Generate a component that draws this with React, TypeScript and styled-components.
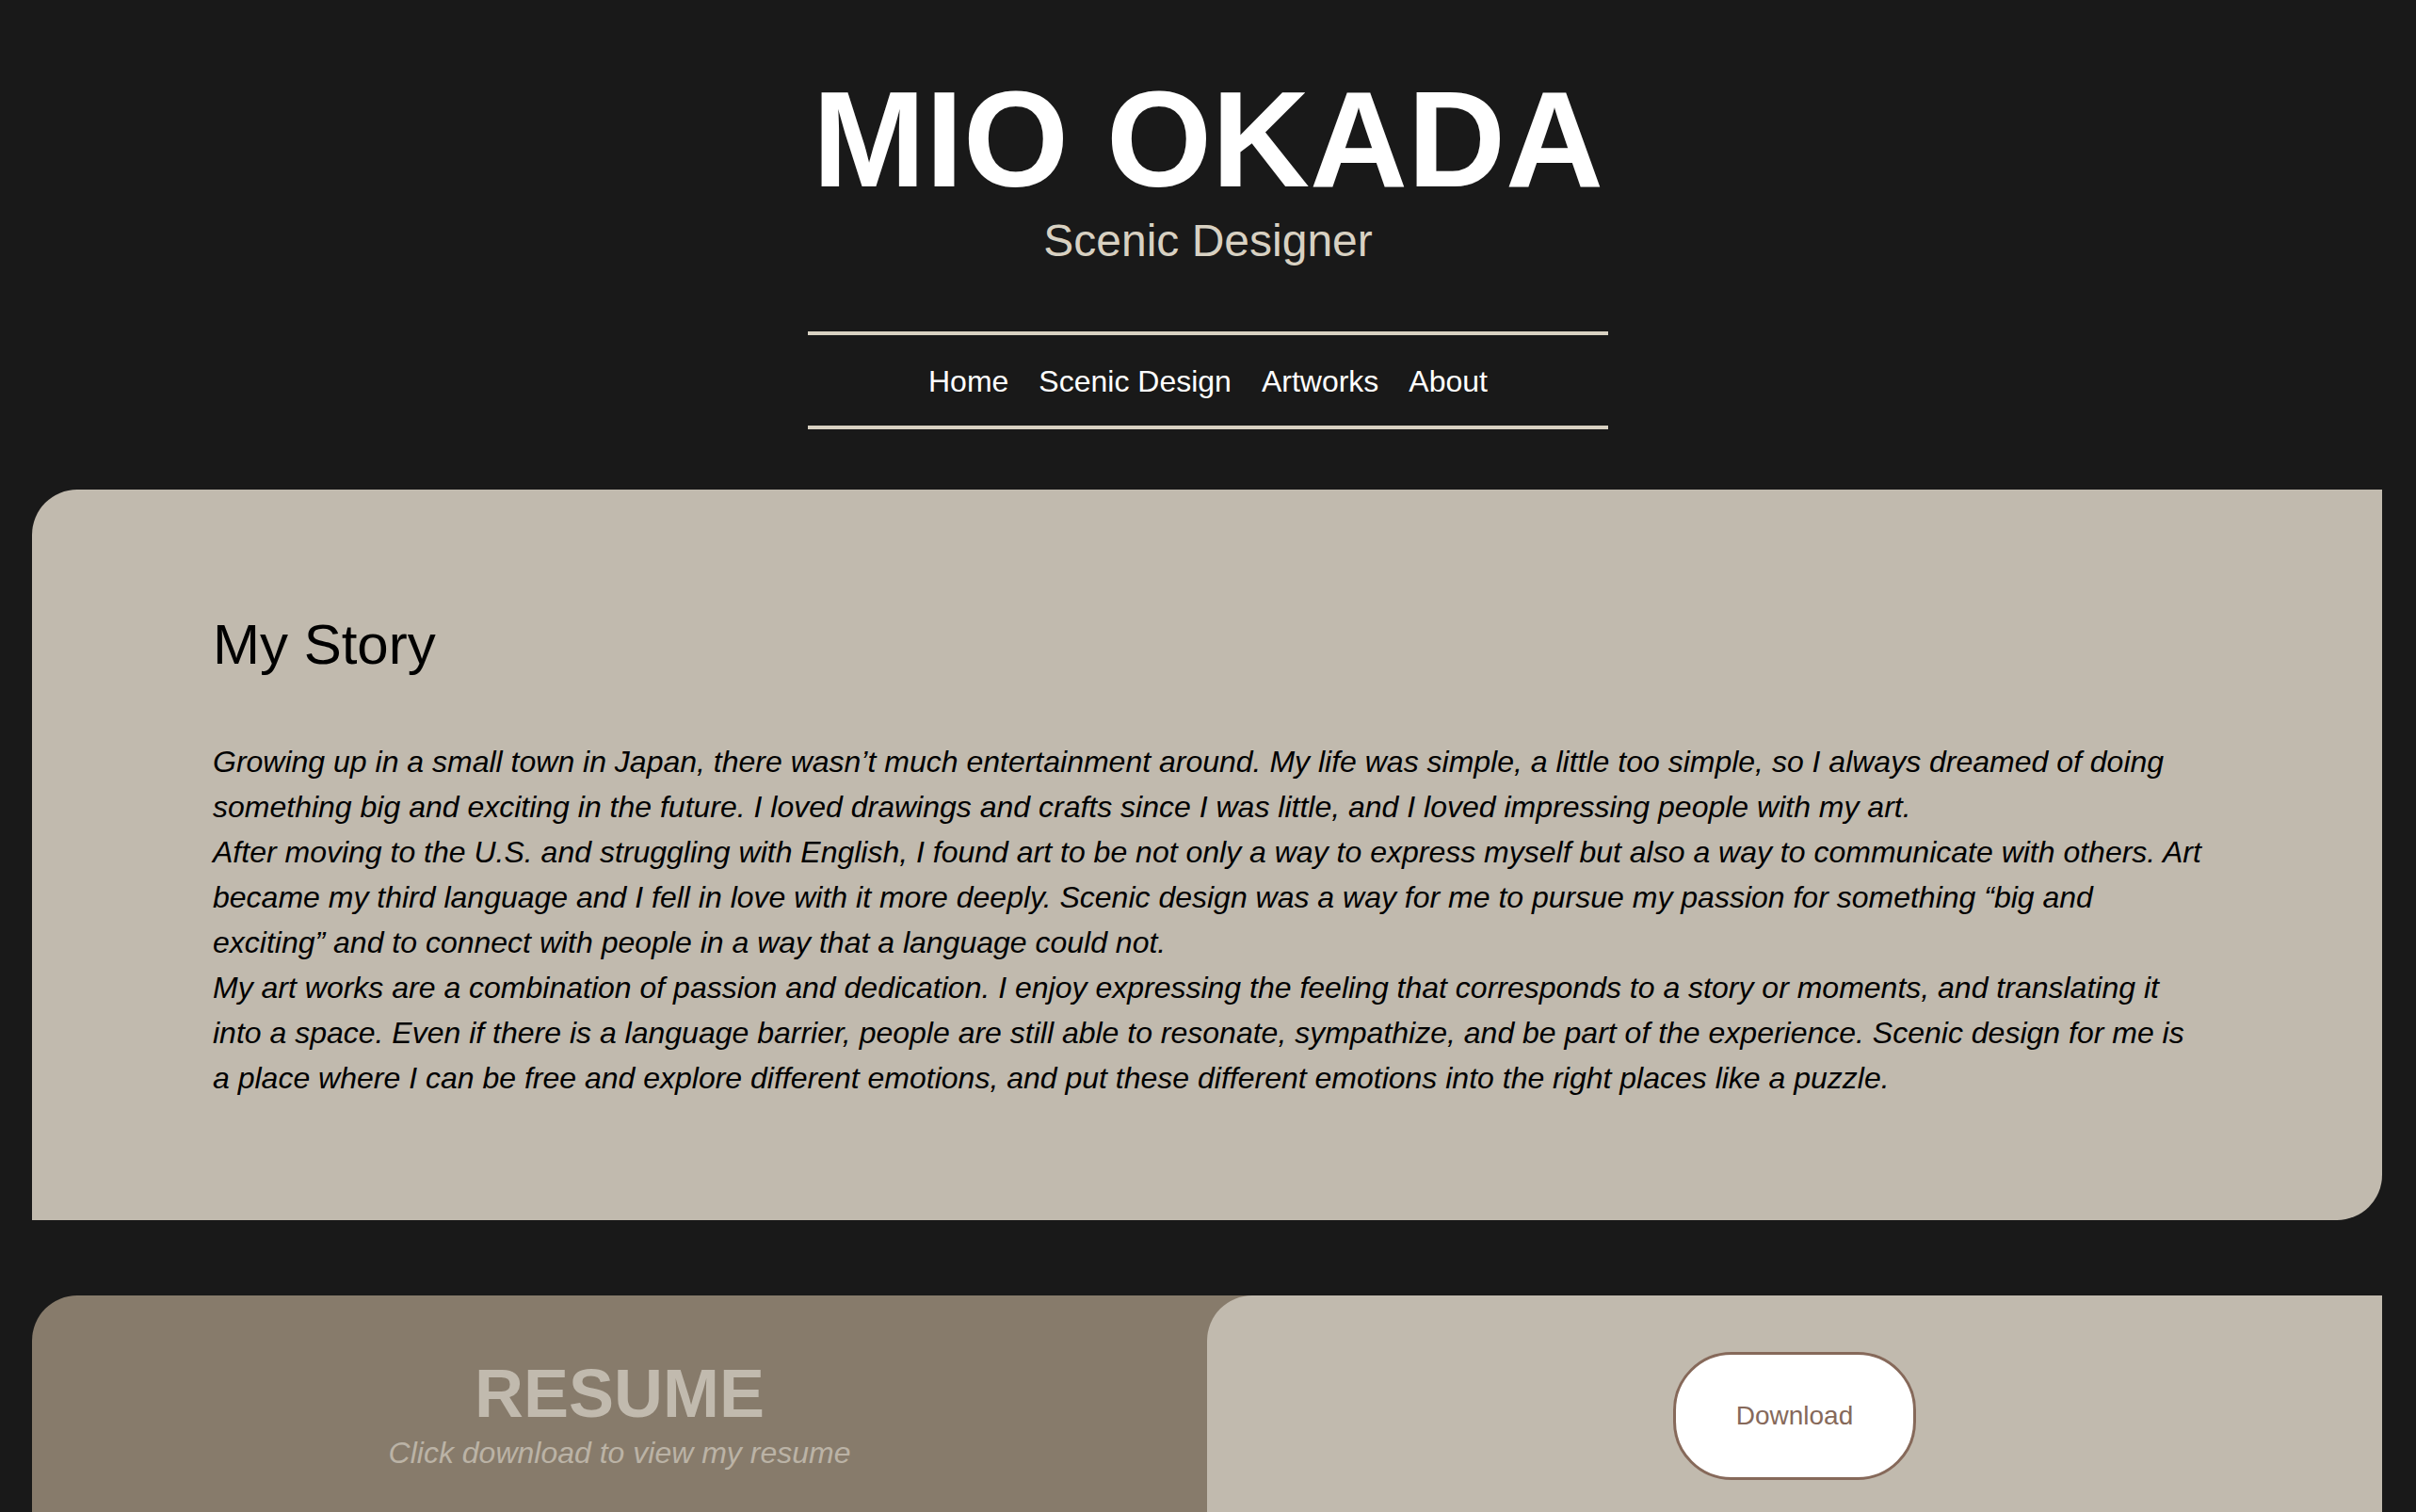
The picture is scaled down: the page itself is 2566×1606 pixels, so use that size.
import React from "react";
import styled, { createGlobalStyle } from "styled-components";

const GlobalStyle = createGlobalStyle`
  html, body {
    margin: 0;
    padding: 0;
    background: #191919;
  }
  body {
    font-family: "Liberation Sans", Arial, Helvetica, sans-serif;
  }
  * { box-sizing: border-box; }
`;

const Page = styled.div`
  min-height: 1606px;
  background: #191919;
  padding-bottom: 80px;
`;

const Header = styled.header`
  display: flex;
  flex-direction: column;
  align-items: center;
  padding-top: 77px;
`;

const Title = styled.h1`
  margin: 0;
  font-size: 144px;
  line-height: 1;
  font-weight: 700;
  color: #ffffff;
  letter-spacing: 0;
`;

const Subtitle = styled.div`
  margin-top: 11px;
  font-size: 48px;
  line-height: 1;
  color: #d8d1c2;
`;

const Nav = styled.nav`
  margin-top: 72px;
  width: 850px;
  border-top: 4px solid #d8d1c2;
  border-bottom: 4px solid #d8d1c2;
  padding: 34px 0 32px;
  display: flex;
  justify-content: center;
  gap: 32px;
`;

const NavLink = styled.a`
  font-size: 32px;
  line-height: 30px;
  color: #ffffff;
  text-decoration: none;
`;

const StoryCard = styled.section`
  margin: 64px 36px 0 34px;
  background: #c1baae;
  border-radius: 48px 0 48px 0;
  padding: 135px 188px 127px 192px;
`;

const StoryHeading = styled.h2`
  margin: 0 0 70px;
  font-size: 60px;
  line-height: 1;
  font-weight: 400;
  color: #000000;
`;

const StoryText = styled.p`
  margin: 0;
  font-size: 32px;
  line-height: 48px;
  font-style: italic;
  color: #000000;
`;

const Resume = styled.section`
  margin: 80px 36px 0 34px;
  display: grid;
  grid-template-columns: 1fr 1fr;
  background: #877b6b;
  border-radius: 48px 0 0 0;
  min-height: 330px;
`;

const ResumeInfo = styled.div`
  display: flex;
  flex-direction: column;
  align-items: center;
  padding-top: 68px;
`;

const ResumeTitle = styled.h2`
  margin: 0;
  font-size: 72px;
  line-height: 1;
  font-weight: 700;
  color: #c1baae;
`;

const ResumeHint = styled.p`
  margin: 11px 0 0;
  font-size: 32px;
  line-height: 1;
  font-style: italic;
  color: #bbb3a6;
`;

const ResumeAction = styled.div`
  background: #c1baae;
  border-radius: 48px 0 0 0;
  display: flex;
  justify-content: center;
  align-items: flex-start;
  padding-top: 60px;
`;

const DownloadButton = styled.button`
  width: 258px;
  height: 136px;
  background: #ffffff;
  border: 3px solid #86695a;
  border-radius: 62px;
  font-family: "Liberation Sans", Arial, Helvetica, sans-serif;
  font-size: 28px;
  color: #86695a;
  cursor: pointer;
`;

export default function App() {
  return (
    <>
      <GlobalStyle />
      <Page>
        <Header>
          <Title>MIO OKADA</Title>
          <Subtitle>Scenic Designer</Subtitle>
          <Nav>
            <NavLink href="#">Home</NavLink>
            <NavLink href="#">Scenic Design</NavLink>
            <NavLink href="#">Artworks</NavLink>
            <NavLink href="#">About</NavLink>
          </Nav>
        </Header>

        <StoryCard>
          <StoryHeading>My Story</StoryHeading>
          <StoryText>
            Growing up in a small town in Japan, there wasn’t much entertainment around. My life was simple, a little too simple, so I always dreamed of doing something big and exciting in the future. I loved drawings and crafts since I was little, and I loved impressing people with my art.
          </StoryText>
          <StoryText>
            After moving to the U.S. and struggling with English, I found art to be not only a way to express myself but also a way to communicate with others. Art became my third language and I fell in love with it more deeply. Scenic design was a way for me to pursue my passion for something “big and exciting” and to connect with people in a way that a language could not.
          </StoryText>
          <StoryText>
            My art works are a combination of passion and dedication. I enjoy expressing the feeling that corresponds to a story or moments, and translating it into a space. Even if there is a language barrier, people are still able to resonate, sympathize, and be part of the experience. Scenic design for me is a place where I can be free and explore different emotions, and put these different emotions into the right places like a puzzle.
          </StoryText>
        </StoryCard>

        <Resume>
          <ResumeInfo>
            <ResumeTitle>RESUME</ResumeTitle>
            <ResumeHint>Click download to view my resume</ResumeHint>
          </ResumeInfo>
          <ResumeAction>
            <DownloadButton>Download</DownloadButton>
          </ResumeAction>
        </Resume>
      </Page>
    </>
  );
}
